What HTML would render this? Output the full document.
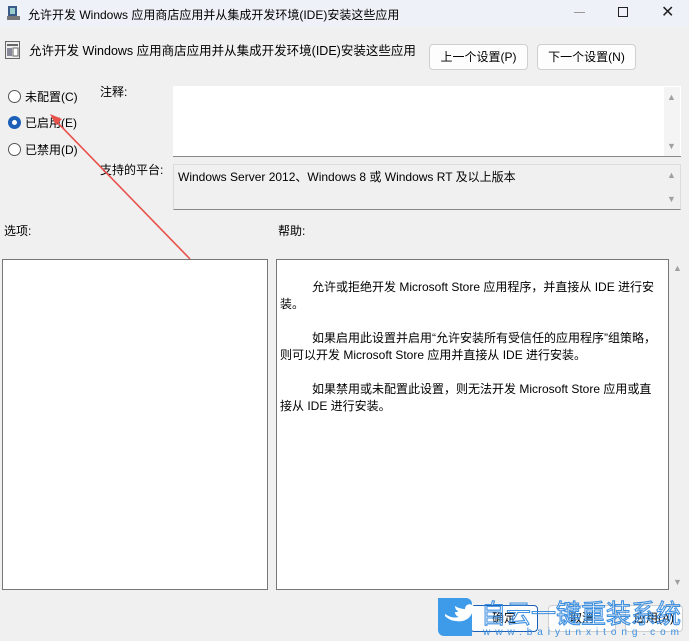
<!DOCTYPE html>
<html><head><meta charset="utf-8"><style>
*{margin:0;padding:0;box-sizing:border-box}
body{width:689px;height:641px;background:#f0f0f0;font-family:"Liberation Sans","Noto Sans CJK SC",sans-serif;font-size:12px;color:#000;position:relative;overflow:hidden}
.a{position:absolute;white-space:nowrap}
.btn{position:absolute;border:1px solid #cfcfcf;border-radius:4px;background:#fdfdfd;text-align:center;font-size:12px}
.box{position:absolute;border:1px solid #a0a0a0;border-bottom-color:#7a7a7a}
.radio{position:absolute;width:13px;height:13px;border:1px solid #555;border-radius:50%;background:#fff}
.tri{position:absolute;color:#a0a0a0;font-size:9px}
</style></head><body>
<div class="a" style="left:0;top:0;width:689px;height:27px;background:#eef2f8"></div>
<svg class="a" style="left:6px;top:5px" width="16" height="16"><rect x="2" y="1" width="9" height="11" fill="#3a5a8a"/><rect x="4" y="3" width="5" height="6" fill="#9cc"/><rect x="1" y="11" width="13" height="4" fill="#777"/></svg>
<div class="a" style="left:28px;top:6px;font-size:12px">允许开发 Windows 应用商店应用并从集成开发环境(IDE)安装这些应用</div>
<div class="a" style="left:574px;top:12px;width:11px;height:1px;background:#999"></div>
<div class="a" style="left:618px;top:7px;width:10px;height:10px;border:1px solid #222"></div>
<div class="a" style="left:661px;top:2px;font-size:16px;color:#222">✕</div>

<svg class="a" style="left:5px;top:41px" width="15" height="18"><rect x="0.5" y="0.5" width="14" height="17" fill="#eee" stroke="#666"/><rect x="2" y="3" width="11" height="2" fill="#666"/><rect x="2" y="7" width="5" height="8" fill="#889"/><rect x="8" y="7" width="5" height="8" fill="#fff" stroke="#666"/></svg>
<div class="a" style="left:29px;top:40px;font-size:12.5px">允许开发 Windows 应用商店应用并从集成开发环境(IDE)安装这些应用</div>
<div class="btn" style="left:429px;top:44px;width:99px;height:26px;line-height:24px">上一个设置(P)</div>
<div class="btn" style="left:537px;top:44px;width:99px;height:26px;line-height:24px">下一个设置(N)</div>

<div class="radio" style="left:8px;top:90px"></div>
<div class="a" style="left:25px;top:88px">未配置(C)</div>
<div class="radio" style="left:8px;top:116px;border:4px solid #1b5fb8"></div>
<div class="a" style="left:25px;top:114px">已启用(E)</div>
<div class="radio" style="left:8px;top:143px"></div>
<div class="a" style="left:25px;top:141px">已禁用(D)</div>

<div class="a" style="left:100px;top:83px">注释:</div>
<div class="box" style="left:173px;top:86px;width:508px;height:71px;background:#fff;border:none;border-bottom:1px solid #888"></div>
<div class="a" style="left:664px;top:87px;width:16px;height:69px;background:#f4f4f4"></div>
<div class="tri" style="left:667px;top:92px">▲</div><div class="tri" style="left:667px;top:141px">▼</div>

<div class="a" style="left:100px;top:161px">支持的平台:</div>
<div class="box" style="left:173px;top:164px;width:508px;height:46px;background:#f0f0f0;border:1px solid #dcdcdc;border-bottom:1px solid #888"></div>
<div class="a" style="left:178px;top:168px">Windows Server 2012、Windows 8 或 Windows RT 及以上版本</div>
<div class="tri" style="left:667px;top:170px">▲</div><div class="tri" style="left:667px;top:194px">▼</div>

<div class="a" style="left:4px;top:222px">选项:</div>
<div class="a" style="left:278px;top:222px">帮助:</div>

<div class="box" style="left:2px;top:259px;width:266px;height:331px;background:#fff;border:1px solid #777"></div>
<div class="box" style="left:276px;top:259px;width:393px;height:331px;background:#fff;border:1px solid #777"></div>
<div class="tri" style="left:673px;top:263px">▲</div><div class="tri" style="left:673px;top:577px">▼</div>
<div class="a" style="left:280px;top:279px;width:378px;white-space:normal;line-height:17px;font-size:12px">
<div style="text-indent:32px">允许或拒绝开发 Microsoft Store 应用程序，并直接从 IDE 进行安装。</div><br>
<div style="text-indent:32px">如果启用此设置并启用“允许安装所有受信任的应用程序”组策略，则可以开发 Microsoft Store 应用并直接从 IDE 进行安装。</div><br>
<div style="text-indent:32px">如果禁用或未配置此设置，则无法开发 Microsoft Store 应用或直接从 IDE 进行安装。</div>
</div>

<div class="btn" style="left:470px;top:605px;width:68px;height:27px;line-height:25px;border-color:#1b5fb8">确定</div>
<div class="btn" style="left:548px;top:605px;width:68px;height:27px;line-height:25px">取消</div>
<div class="btn" style="left:625px;top:605px;width:58px;height:27px;line-height:25px">应用(A)</div>

<svg class="a" style="left:0;top:0" width="689" height="641">
<line x1="190" y1="259" x2="55" y2="120" stroke="#e8504a" stroke-width="1.6"/>
<polygon points="50,114 62,119 56,125" fill="#e8504a"/>
<path d="M438 598 h28 a6 6 0 0 1 6 6 v32 h-28 a6 6 0 0 1 -6 -6z" fill="#3d9be9"/>
<path d="M445 614 c6 4 10 4 14 3 c-3 -1 -4 -3 -4 -5 c2 0 3 0 3 -1 c-2 -1 -3 -3 -3 -5 c3 2 7 3 10 3 c0 -4 4 -6 7 -4 l2 -1 l-1 2 l2 0 l-2 2 c0 8 -7 15 -17 13 c-4 0 -8 -2 -11 -5z" fill="#fff"/>
<text x="481" y="623" font-family="Noto Sans CJK SC,sans-serif" font-size="26" fill="none" stroke="#3d8fe0" stroke-width="1.1" textLength="200" lengthAdjust="spacingAndGlyphs">自云一键重装系统</text>
<text x="483" y="635" font-family="Liberation Sans,sans-serif" font-size="10" fill="#3d8fe0" textLength="196" lengthAdjust="spacing">www.baiyunxitong.com</text>
</svg>
</body></html>
